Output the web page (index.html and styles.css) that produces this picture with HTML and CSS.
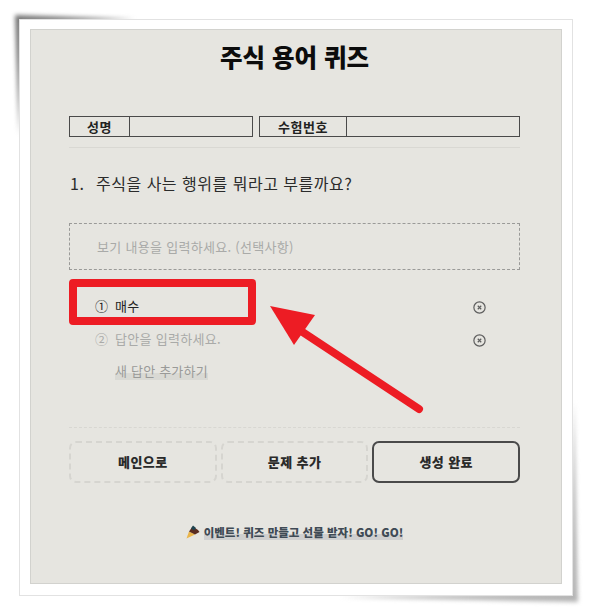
FILE: index.html
```html
<!DOCTYPE html>
<html lang="ko">
<head>
<meta charset="utf-8">
<title>주식 용어 퀴즈</title>
<link rel="stylesheet" href="styles.css">
</head>
<body>
<div class="frame">
  <svg class="frame-shadow" viewBox="0 0 592 615">
    <polygon class="shadow-tl" points="15,15 135,19 22,22 19,135"/>
    <polygon class="shadow-br" points="578,602 574,400 570,593 340,597"/>
  </svg>
  <main class="sheet">
    <h1 class="title">주식 용어 퀴즈</h1>
    <div class="info">
      <div class="field field-name"><span class="label">성명</span><span class="value"></span></div>
      <div class="field field-id"><span class="label">수험번호</span><span class="value"></span></div>
    </div>
    <h2 class="question"><span class="qnum">1.</span>주식을 사는 행위를 뭐라고 부를까요?</h2>
    <div class="choice-box">보기 내용을 입력하세요. (선택사항)</div>
    <ul class="answers">
      <li class="answer filled">
        <span class="mark">①</span><span class="text">매수</span>
        <svg class="del" viewBox="0 0 12 12"><circle cx="6" cy="6" r="5.2"/><path d="M4.4 4.4l3.2 3.2M7.6 4.4l-3.2 3.2"/></svg>
      </li>
      <li class="answer">
        <span class="mark">②</span><span class="text">답안을 입력하세요.</span>
        <svg class="del" viewBox="0 0 12 12"><circle cx="6" cy="6" r="5.2"/><path d="M4.4 4.4l3.2 3.2M7.6 4.4l-3.2 3.2"/></svg>
      </li>
    </ul>
    <div class="add-row"><span class="add">새 답안 추가하기</span></div>
    <div class="buttons">
      <button class="btn">메인으로</button>
      <button class="btn">문제 추가</button>
      <button class="btn primary">생성 완료</button>
    </div>
    <p class="event">
      <svg class="pencil" viewBox="0 0 14 14"><path class="p-tip" d="M0.5 13.5L3 6.5 9 9.5z"/><path class="p-body" d="M3 6.5L6.5 1.5 9 3 12 5 13.5 7 9 9.5z"/><path class="p-top" d="M5 3.5L7 0.5 10 3 8 5.5z"/></svg>
      <span class="event-text">이벤트! 퀴즈 만들고 선물 받자! GO! GO!</span>
    </p>
    <div class="callout-box"></div>
    <svg class="callout-arrow" viewBox="0 0 531 555">
      <path class="arrow-shaft" d="M270 301L388 379"/>
      <path class="arrow-head" d="M239 276L284 285 263 315z"/>
    </svg>
  </main>
</div>
</body>
</html>
```
FILE: styles.css
```css
* { box-sizing: border-box; }
html, body { margin: 0; padding: 0; }
html { background: #fff; }
body {
  width: 592px;
  height: 615px;
  overflow: hidden;
  font-family: "Noto Sans CJK KR", "Noto Sans", sans-serif;
  padding: 19px;
}
.frame {
  position: relative;
  width: 554px;
  height: 577px;
  background: #fff;
  border: 1px solid #e2e2e2;
  padding: 9px 10px 11px 10px;
}
.frame-shadow {
  position: absolute;
  left: -20px;
  top: -20px;
  width: 592px;
  height: 615px;
  z-index: -1;
  filter: blur(2px);
}
.shadow-tl { fill: #777; }
.shadow-br { fill: #b4b4b4; }
.sheet {
  position: relative;
  height: 100%;
  background: #e6e5e0;
  border: 1px solid #d2d2ce;
  padding: 0 41px 0 38px;
}
.title {
  margin: 12px 0 0;
  height: 29px;
  line-height: 29px;
  text-align: center;
  font-size: 24.5px;
  font-weight: 900;
  color: #0c0c0c;
}
.info {
  display: flex;
  gap: 6px;
  margin-top: 45px;
  padding-bottom: 10px;
  border-bottom: 1px solid #d9d8d3;
}
.field {
  display: flex;
  height: 21px;
  border: 1px solid #4a4a4a;
  font-size: 13px;
  font-weight: 700;
  color: #222;
}
.field-name { width: 184px; }
.field-id { width: 261px; }
.label {
  display: flex;
  align-items: center;
  justify-content: center;
  border-right: 1px solid #4a4a4a;
  letter-spacing: .5px;
}
.field-name .label { width: 60px; }
.field-id .label { width: 87px; }
.value { flex: 1; }
.question {
  margin: 23px 0 0;
  height: 24px;
  line-height: 24px;
  font-size: 16px;
  font-weight: 400;
  letter-spacing: .5px;
  padding-left: 1px;
  color: #2b2b2b;
}
.qnum {
  display: inline-block;
  width: 26px;
}
.choice-box {
  margin-top: 28px;
  height: 47px;
  padding-left: 27px;
  line-height: 45px;
  border: 1px dashed #9a9a98;
  font-size: 13px;
  letter-spacing: .3px;
  color: #a9aaa8;
}
.answers {
  list-style: none;
  margin: 19px 0 0;
  padding: 0;
}
.answer {
  display: flex;
  align-items: center;
  height: 33px;
  padding-left: 26px;
  font-size: 13px;
  letter-spacing: .3px;
  color: #a9aaa8;
}
.answer.filled { color: #222; }
.mark {
  width: 20px;
  font-size: 13px;
}
.text { flex: 1; }
.del {
  width: 13px;
  height: 13px;
  margin-top: 4px;
  margin-right: 34px;
  fill: none;
  stroke: #5e5e5e;
  stroke-width: 1.1;
}
.add-row {
  margin-top: 5px;
  padding-left: 46px;
  line-height: 18px;
}
.add {
  display: inline-block;
  font-size: 13px;
  letter-spacing: .2px;
  color: #999a98;
  background: linear-gradient(transparent 60%, #d9d9d4 60%);
}
.buttons {
  display: flex;
  gap: 4px;
  margin-top: 47px;
  padding-top: 13px;
  border-top: 1px dashed #d8d7d2;
}
.btn {
  flex: 1;
  height: 42px;
  padding: 0 0 2px;
  background: transparent;
  border: 2px dashed #d6d5d0;
  border-radius: 7px;
  font-family: inherit;
  font-size: 13px;
  font-weight: 900;
  letter-spacing: .4px;
  color: #2a2a2a;
}
.btn.primary { border: 2px solid #4a4a4a; }
.event {
  display: flex;
  justify-content: center;
  align-items: center;
  gap: 4px;
  margin: 41px 0 0;
  font-size: 11.5px;
  font-weight: 800;
  color: #3f4a55;
}
.pencil { width: 14px; height: 14px; flex: none; }
.p-tip { fill: #eab54a; }
.p-body { fill: #5a2c20; }
.p-top { fill: #1f4450; }
.event-text { background: linear-gradient(transparent 62%, #cfcfcf 62%); }
.callout-box {
  position: absolute;
  left: 38px;
  top: 249px;
  width: 187px;
  height: 46px;
  border: 8px solid #ed1c24;
  border-radius: 4px;
}
.callout-arrow {
  position: absolute;
  left: 0;
  top: 0;
  width: 531px;
  height: 555px;
  pointer-events: none;
}
.arrow-shaft { stroke: #ed1c24; stroke-width: 8; stroke-linecap: round; fill: none; }
.arrow-head { fill: #ed1c24; }
```
